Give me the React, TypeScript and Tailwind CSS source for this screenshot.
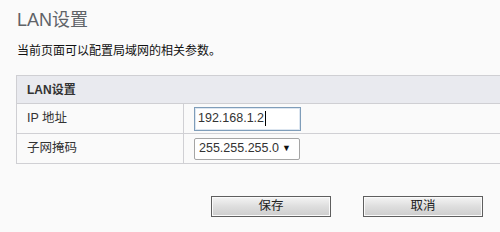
import React from 'react';

const font = { fontFamily: '"Liberation Sans", "Noto Sans CJK SC", sans-serif' };

// 表格中的一行：左侧标签 + 右侧控件
const FormRow: React.FC<{ label: string; children: React.ReactNode }> = ({ label, children }) => (
  <div className="flex h-[30px] border-b border-[#d0d0d4]">
    <div className="w-[167px] shrink-0 flex items-center pl-[10px] text-[12.5px] text-[#333] border-r border-[#d0d0d4]">
      {label}
    </div>
    <div className="flex items-center pl-[10px]">{children}</div>
  </div>
);

const Button: React.FC<{ label: string }> = ({ label }) => (
  <button className="w-[120px] h-[21px] border border-[#5e5e5e] bg-gradient-to-b from-[#f4f4f4] via-[#dedede] to-[#cdcdcd] shadow-[inset_0_0_0_1px_#fafafa] text-[12.5px] text-[#222] leading-none">
    {label}
  </button>
);

export default function App() {
  return (
    <div className="w-[500px] h-[232px] bg-[#fafafa] overflow-hidden" style={font}>
      <div className="pl-[17px] pt-[8px] text-[18px] leading-[24px] text-[#5f6368]">LAN设置</div>
      <div className="pl-[17px] pt-[11px] text-[12px] leading-[16px] text-[#111]">当前页面可以配置局域网的相关参数。</div>

      <div className="ml-[16px] mt-[16px] border-l border-t border-[#cfcfd3]">
        <div className="h-[28px] flex items-center pl-[10px] bg-[#e9eaef] border-b border-[#cfcfd3] text-[12px] font-bold text-[#333]">
          LAN设置
        </div>
        <FormRow label="IP 地址">
          <div className="w-[107px] h-[24px] flex items-center border border-[#7f9db9] bg-white pl-[3px] text-[12.5px] text-[#333] shadow-[inset_0_0_0_1px_#dde6f0]">
            192.168.1.2
            <span className="inline-block w-px h-[15px] bg-black ml-px" />
          </div>
        </FormRow>
        <FormRow label="子网掩码">
          <div className="w-[106px] h-[22px] flex items-center justify-between border border-[#a5a5a5] bg-white pl-[4px] pr-[8px] text-[12.5px] text-[#333] rounded-[2px]">
            <span>255.255.255.0</span>
            <span className="text-[9px] text-[#111]">▼</span>
          </div>
        </FormRow>
      </div>

      <div className="flex gap-[32px] pl-[211px] pt-[32px]">
        <Button label="保存" />
        <Button label="取消" />
      </div>
    </div>
  );
}
